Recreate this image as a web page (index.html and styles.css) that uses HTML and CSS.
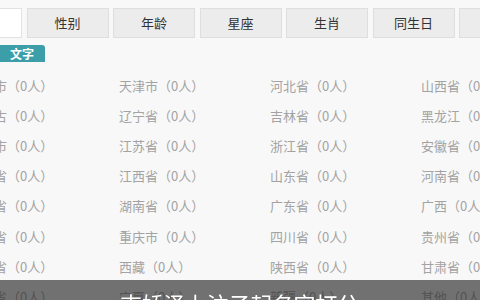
FILE: index.html
```html
<!DOCTYPE html>
<html lang="zh">
<head>
<meta charset="utf-8">
<link rel="stylesheet" href="styles.css">
</head>
<body>
<div class="page">
  <div class="tabs">
    <div class="tab active">地区</div>
    <div class="tab">性别</div>
    <div class="tab">年龄</div>
    <div class="tab">星座</div>
    <div class="tab">生肖</div>
    <div class="tab">同生日</div>
    <div class="tab">同名</div>
  </div>
  <div class="badge-row"><span class="badge">文字</span></div>
  <div class="grid">
    <span>北京市（0人）</span><span>天津市（0人）</span><span>河北省（0人）</span><span>山西省（0人）</span>
    <span>内蒙古（0人）</span><span>辽宁省（0人）</span><span>吉林省（0人）</span><span>黑龙江（0人）</span>
    <span>上海市（0人）</span><span>江苏省（0人）</span><span>浙江省（0人）</span><span>安徽省（0人）</span>
    <span>福建省（0人）</span><span>江西省（0人）</span><span>山东省（0人）</span><span>河南省（0人）</span>
    <span>湖北省（0人）</span><span>湖南省（0人）</span><span>广东省（0人）</span><span>广西（0人）</span>
    <span>海南省（0人）</span><span>重庆市（0人）</span><span>四川省（0人）</span><span>贵州省（0人）</span>
    <span>云南省（0人）</span><span>西藏（0人）</span><span>陕西省（0人）</span><span>甘肃省（0人）</span>
    <span>青海省（0人）</span><span>宁夏（0人）</span><span>新疆（0人）</span><span>其他（0人）</span>
  </div>
</div>
<div class="overlay">吉娇泽上注子起名字打分</div>
</body>
</html>
```

FILE: styles.css
```css
html, body {
  margin: 0;
  padding: 0;
  background: #f8f8f8;
  overflow: hidden;
}
body {
  width: 480px;
  height: 300px;
  font-family: "Noto Sans CJK SC", "Noto Sans", sans-serif;
}
.page {
  margin-left: -60px;
  width: 700px;
}
.tabs {
  display: flex;
  gap: 4.5px;
  padding-top: 8px;
}
.tab {
  box-sizing: border-box;
  width: 82px;
  height: 30px;
  line-height: 28px;
  text-align: center;
  font-size: 13px;
  color: #333;
  background: #ececec;
  border: 1px solid #dedede;
  flex: none;
}
.tab.active {
  background: #fff;
  border-color: #e2e2e2;
}
.badge-row {
  margin-top: 2px;
  padding-left: 59px;
  height: 17px;
}
.badge {
  display: inline-block;
  height: 17px;
  line-height: 17px;
  padding: 0 11px;
  background: #3b9ea8;
  color: #fff;
  font-size: 12px;
  font-weight: bold;
  border-radius: 0 3px 0 0;
}
.grid {
  margin-top: 13px;
  padding-left: 28px;
  display: grid;
  grid-template-columns: repeat(4, 151px);
  grid-auto-rows: 30.2px;
  align-items: center;
  font-size: 13px;
  color: #a3a3a3;
  white-space: nowrap;
}
.overlay {
  position: fixed;
  left: 0;
  right: 0;
  top: 280px;
  height: 40px;
  background: rgba(40, 40, 40, 0.65);
  color: #fff;
  font-size: 22px;
  line-height: 26px;
  padding-top: 10px;
  padding-left: 120px;
  letter-spacing: -0.3px;
  box-sizing: border-box;
  white-space: nowrap;
}
```
